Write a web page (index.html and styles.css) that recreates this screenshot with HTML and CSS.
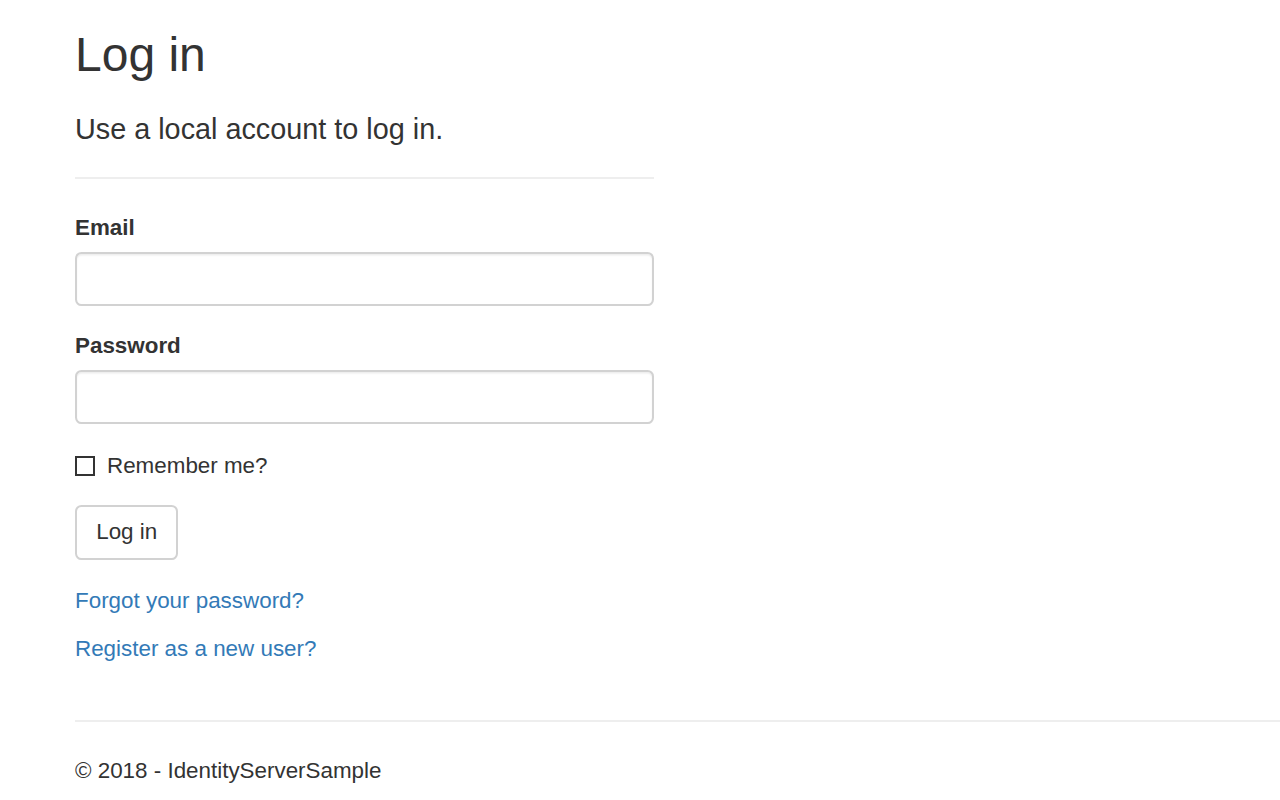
FILE: index.html
```html
<!DOCTYPE html>
<html lang="en">
<head>
<meta charset="utf-8">
<title>Log in - IdentityServerSample</title>
<link rel="stylesheet" href="styles.css">
</head>
<body>
<div class="page">
  <h2 class="title">Log in</h2>
  <div class="row">
    <section class="col">
      <form class="login-form">
        <h4 class="subtitle">Use a local account to log in.</h4>
        <hr class="divider">
        <div class="form-group">
          <label class="field-label" for="email">Email</label>
          <input class="form-control" id="email" type="email">
        </div>
        <div class="form-group">
          <label class="field-label" for="password">Password</label>
          <input class="form-control" id="password" type="password">
        </div>
        <div class="form-group check-group">
          <label class="check-label"><input class="check" type="checkbox"><span>Remember me?</span></label>
        </div>
        <div class="form-group">
          <button type="button" class="btn">Log in</button>
        </div>
        <div class="links">
          <p class="link-line"><a href="#">Forgot your password?</a></p>
          <p class="link-line"><a href="#">Register as a new user?</a></p>
        </div>
      </form>
    </section>
  </div>
  <hr class="footer-rule">
  <footer class="footer">
    <p>&copy; 2018 - IdentityServerSample</p>
  </footer>
</div>
</body>
</html>
```

FILE: styles.css
```css
html, body {
  margin: 0;
  padding: 0;
  background: #fff;
}
body {
  font-family: "Liberation Sans", Arial, sans-serif;
  font-size: 22.4px;
  line-height: 32px;
  color: #333;
  overflow: hidden;
}
.page {
  padding: 29px 0 0 75px;
}
.title {
  margin: 0 0 16px;
  font-size: 48px;
  line-height: 52.8px;
  font-weight: 500;
}
.row {
  display: flow-root;
}
.col {
  width: 579px;
}
.login-form {
  margin: 0;
}
.subtitle {
  margin: 16px 0 0;
  font-size: 28.8px;
  line-height: 31.7px;
  font-weight: 500;
}
.divider {
  margin: 31px 0 33px;
  border: 0;
  border-top: 2px solid #eee;
  height: 0;
}
.form-group {
  margin-bottom: 24px;
}
.field-label {
  display: inline-block;
  margin-bottom: 8px;
  font-weight: 700;
}
.form-control {
  display: block;
  box-sizing: border-box;
  width: 100%;
  height: 54px;
  margin: 0;
  padding: 9.6px 19.2px;
  font: inherit;
  border: 2px solid #d2d2d2;
  border-radius: 6.4px;
  box-shadow: inset 0 1.6px 1.6px rgba(0,0,0,.075);
  background: #fff;
}
.check-group {
  padding-top: 2px;
}
.check-label {
  display: flex;
  align-items: center;
  height: 32px;
}
.check {
  appearance: none;
  -webkit-appearance: none;
  box-sizing: border-box;
  width: 20px;
  height: 20px;
  margin: 1px 12px 0 0;
  border: 2px solid #333;
  background: #fff;
  border-radius: 0;
}
.btn {
  display: inline-block;
  box-sizing: border-box;
  height: 55px;
  margin-top: -1px;
  padding: 9.6px 19.2px;
  font: inherit;
  color: #333;
  background: #fff;
  border: 2px solid #d2d2d2;
  border-radius: 6.4px;
}
.links {
  padding-bottom: 39px;
  padding-top: 1px;
}
.link-line {
  margin: 0 0 16px;
}
.link-line a {
  color: #337ab7;
  text-decoration: none;
}
.footer-rule {
  margin: 0 0 33px;
  border: 0;
  border-top: 2px solid #eee;
  height: 0;
}
.footer p {
  margin: 0 0 16px;
}
```
